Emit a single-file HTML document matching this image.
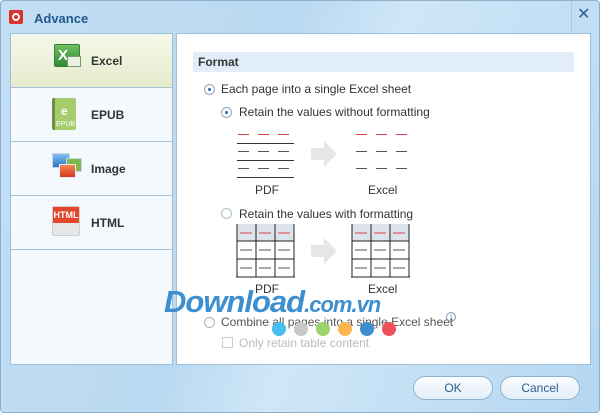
<!DOCTYPE html>
<html><head><meta charset="utf-8"><style>
*{margin:0;padding:0;box-sizing:border-box}
body{width:600px;height:413px;overflow:hidden;font-family:"Liberation Sans",sans-serif;background:#fff}
.a{position:absolute}
#win{left:0;top:0;width:600px;height:413px;background:linear-gradient(110deg,#c4def3 0%,#b9d9f2 40%,#cfe6f7 55%,#b5d7f2 100%);border:1px solid #8fb0cc;border-radius:4px}
.t{font-size:12px;color:#333;white-space:nowrap}
.side{left:9px;top:32px;width:163px;height:332px;background:#f3f9fd;border:1px solid #9cc0dc;border-right:none}
.item{position:absolute;left:0;width:162px;height:54px;border-bottom:1px solid #aac3d6}
.item span{position:absolute;left:80px;top:20px;font-weight:bold;font-size:12px;color:#333}
.rad{position:absolute;width:11px;height:11px;border-radius:50%;border:1px solid #8aa6bf;background:#fff}
.rad.on::after{content:"";position:absolute;left:3px;top:3px;width:3px;height:3px;border-radius:50%;background:#2a6bb0}
.d{position:absolute;height:1px;width:11px}
.dot{position:absolute;width:14px;height:14px;border-radius:50%;top:321px}
.btn{position:absolute;top:375px;height:24px;border:1px solid #8eb3cf;border-radius:12px;background:linear-gradient(#fbfdff,#e3eef8);font-size:12px;color:#2b5e8c;text-align:center;line-height:22px}
</style></head><body>
<div id="win" class="a">
<div class="a" style="left:8px;top:9px;width:14px;height:14px;background:#d8322d;border-radius:2px"><div class="a" style="left:3px;top:3px;width:8px;height:8px;border:2px solid #fff;border-radius:50%"></div></div>
<div class="a" style="left:33px;top:10px;font-size:13px;font-weight:bold;color:#1e5a8e">Advance</div>
<div class="a" style="left:576px;top:3px;font-size:16px;color:#2a5f90">✕</div>
<div class="a" style="left:570px;top:0;width:1px;height:31px;background:#a8c8e0"></div>

<div class="a side">
<div class="item" style="top:0;background:linear-gradient(#f6f8ea,#e4eccc)"><span>Excel</span>
<div class="a" style="left:43px;top:10px;width:26px;height:23px;background:linear-gradient(#6fbf5c,#2f8a3a);border:1px solid #3d7a3a;border-radius:2px"><div class="a" style="left:3px;top:2px;color:#fff;font-weight:bold;font-size:15px">X</div><div class="a" style="left:12px;top:11px;width:14px;height:11px;background:#eaf3e6;border:1px solid #7a9a70"></div></div></div>
<div class="item" style="top:54px"><span style="left:80px">EPUB</span>
<div class="a" style="left:41px;top:10px;width:24px;height:32px;background:linear-gradient(90deg,#6f8d4a 3px,#a6cc6c 3px);border-radius:2px"><div class="a" style="left:4px;top:23px;font-size:7px;color:#fff">EPUB</div><div class="a" style="left:9px;top:6px;font-size:12px;color:#fff;font-weight:bold">e</div></div></div>
<div class="item" style="top:108px"><span>Image</span>
<div class="a" style="left:41px;top:11px;width:18px;height:15px;background:linear-gradient(#7fc1f0,#2a78c8);border:1px solid #c7d7e6"></div>
<div class="a" style="left:55px;top:16px;width:16px;height:14px;background:#7eb84e;border:1px solid #c7d7e6"></div>
<div class="a" style="left:48px;top:22px;width:17px;height:14px;background:linear-gradient(#f38a4a,#d5352a);border:1px solid #e9edf1"></div></div>
<div class="item" style="top:162px"><span>HTML</span>
<div class="a" style="left:41px;top:10px;width:28px;height:30px;background:#e6e6e6;border:1px solid #cfcfcf;border-radius:2px"><div style="background:#e2452c;height:16px;color:#fff;font-size:9px;font-weight:bold;text-align:center;line-height:16px">HTML</div></div></div>
</div>
<div class="a" style="left:171px;top:32px;width:5px;height:332px;background:#c0d9ec;border-left:1px solid #9ebfd8;border-right:1px solid #9ebfd8"></div>
<div class="a" style="left:176px;top:32px;width:414px;height:332px;background:#fff;border:1px solid #9cc0dc;border-left:none"></div>

<div class="a" style="left:192px;top:51px;width:381px;height:20px;background:#e1eef9"></div>
<div class="a" style="left:197px;top:54px;font-size:12px;font-weight:bold;color:#333">Format</div>

<div class="rad on" style="left:203px;top:83px"></div><div class="a t" style="left:220px;top:81px">Each page into a single Excel sheet</div>
<div class="rad on" style="left:220px;top:106px"></div><div class="a t" style="left:238px;top:104px">Retain the values without formatting</div>

<div class="d" style="left:237px;top:133px;background:#d9404b"></div><div class="d" style="left:257px;top:133px;background:#d9404b"></div><div class="d" style="left:277px;top:133px;background:#d9404b"></div>
<div class="a" style="left:236px;top:142px;width:57px;height:1px;background:#333"></div>
<div class="d" style="left:237px;top:150px;background:#555"></div><div class="d" style="left:257px;top:150px;background:#555"></div><div class="d" style="left:277px;top:150px;background:#555"></div>
<div class="a" style="left:236px;top:159px;width:57px;height:1px;background:#333"></div>
<div class="d" style="left:237px;top:167px;background:#555"></div><div class="d" style="left:257px;top:167px;background:#555"></div><div class="d" style="left:277px;top:167px;background:#555"></div>
<div class="a" style="left:236px;top:176px;width:57px;height:1px;background:#333"></div>
<svg class="a" style="left:310px;top:140px" width="27" height="27"><path d="M0 7H13V0L26 13 13 26V19H0Z" fill="#e6e6e6"/></svg>
<div class="d" style="left:355px;top:133px;background:#d9404b"></div><div class="d" style="left:375px;top:133px;background:#d9404b"></div><div class="d" style="left:395px;top:133px;background:#d9404b"></div>
<div class="d" style="left:355px;top:150px;background:#555"></div><div class="d" style="left:375px;top:150px;background:#555"></div><div class="d" style="left:395px;top:150px;background:#555"></div>
<div class="d" style="left:355px;top:167px;background:#555"></div><div class="d" style="left:375px;top:167px;background:#555"></div><div class="d" style="left:395px;top:167px;background:#555"></div>
<div class="a t" style="left:254px;top:182px">PDF</div><div class="a t" style="left:367px;top:182px">Excel</div>

<div class="rad" style="left:220px;top:207px;border-color:#a8c8a8"></div><div class="a t" style="left:238px;top:206px">Retain the values with formatting</div>

<svg class="a" style="left:235px;top:223px" width="60" height="55">
<rect x="1" y="0" width="57" height="17" fill="#dde3ea"/>
<path d="M1 0V53M20 0V53M39 0V53M58 0V53M1 17H58M1 35H58M0 53H59" stroke="#222" stroke-width="1" fill="none"/>
<path d="M4 9H16M23 9H35M42 9H54" stroke="#d9404b"/>
<path d="M4 26H16M23 26H35M42 26H54M4 44H16M23 44H35M42 44H54" stroke="#555"/>
</svg>
<svg class="a" style="left:310px;top:237px" width="27" height="27"><path d="M0 7H13V0L26 13 13 26V19H0Z" fill="#e6e6e6"/></svg>
<svg class="a" style="left:350px;top:223px" width="60" height="55">
<rect x="1" y="0" width="57" height="17" fill="#dde3ea"/>
<path d="M1 0V53M20 0V53M39 0V53M58 0V53M1 17H58M1 35H58M0 53H59" stroke="#222" stroke-width="1" fill="none"/>
<path d="M4 9H16M23 9H35M42 9H54" stroke="#d9404b"/>
<path d="M4 26H16M23 26H35M42 26H54M4 44H16M23 44H35M42 44H54" stroke="#555"/>
</svg>
<div class="a t" style="left:254px;top:281px">PDF</div><div class="a t" style="left:367px;top:281px">Excel</div>

<div class="rad" style="left:203px;top:316px;border-color:#b0b0b0"></div><div class="a t" style="left:220px;top:314px;color:#555">Combine all pages into a single Excel sheet</div>
<div class="a" style="left:445px;top:311px;width:10px;height:10px;border:1px solid #7a9ab5;border-radius:50%;font-size:7px;color:#5a7fa5;text-align:center;line-height:8px">i</div>
<div class="a" style="left:221px;top:336px;width:11px;height:11px;border:1px solid #ccc"></div><div class="a t" style="left:238px;top:335px;color:#bbb">Only retain table content</div>

<div class="a" style="left:163px;top:285px;font-size:31px;font-weight:bold;font-style:italic;color:#3d8fd0;letter-spacing:-1px;line-height:31px;white-space:nowrap">Download<span style="font-size:22px">.com.vn</span></div>
<div class="dot" style="left:271px;background:#48bdf0"></div>
<div class="dot" style="left:293px;background:#c8c8c8"></div>
<div class="dot" style="left:315px;background:#9ed26a"></div>
<div class="dot" style="left:337px;background:#fbb74e"></div>
<div class="dot" style="left:359px;background:#3c8ed0"></div>
<div class="dot" style="left:381px;background:#f0505a"></div>

<div class="btn" style="left:412px;width:80px">OK</div>
<div class="btn" style="left:499px;width:80px">Cancel</div>
</div>
</body></html>
